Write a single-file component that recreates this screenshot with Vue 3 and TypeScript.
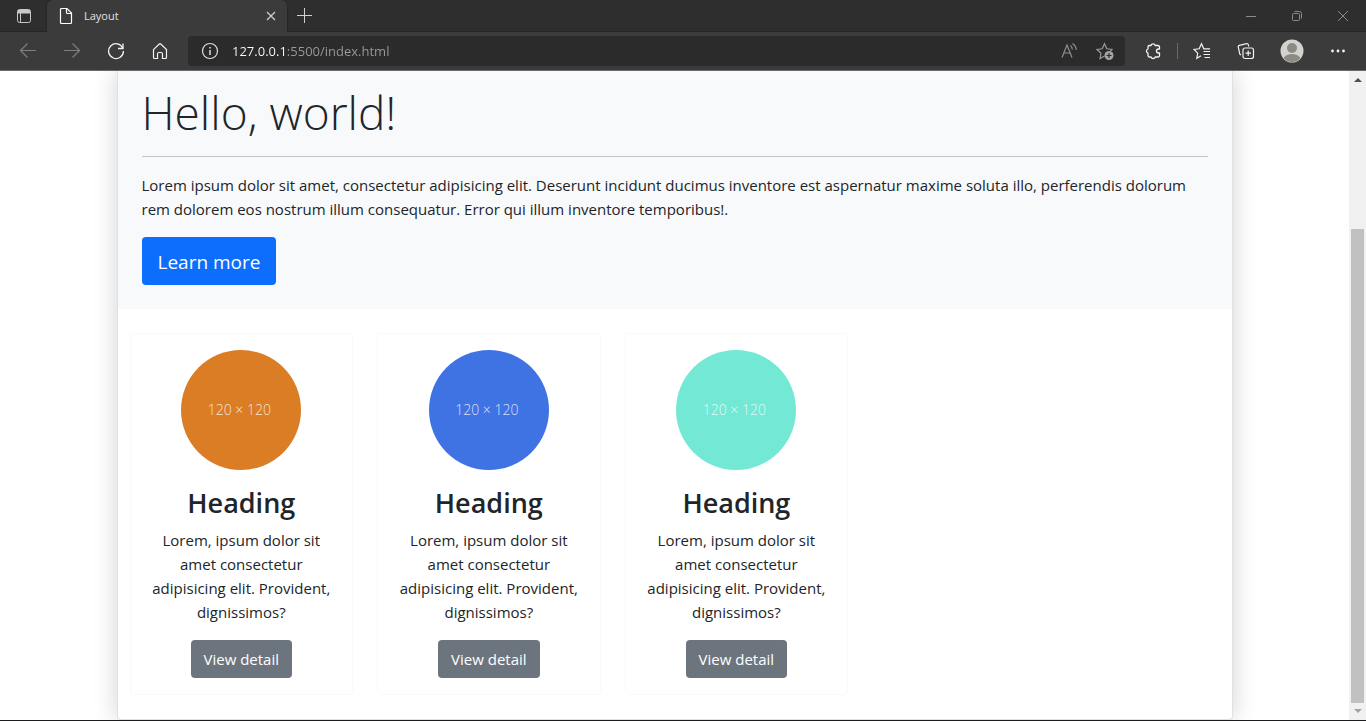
<script setup lang="ts">
import { ref } from 'vue'

interface Card {
  id: number
  color: string
  title: string
  text: string
}

const address = ref('127.0.0.1:5500/index.html')

const cards: Card[] = ['#da7d25', '#3f73e4', '#73e8d5'].map((color, index) => ({
  id: index + 1,
  color,
  title: 'Heading',
  text: 'Lorem, ipsum dolor sit amet consectetur adipisicing elit. Provident, dignissimos?',
}))
</script>

<template>
  <div class="window">
    <header class="tabs">
      <button class="tab-menu" type="button" aria-label="Tab actions">
        <svg width="16" height="16" viewBox="0 0 16 16">
          <rect x="1.5" y="1.5" width="13" height="13" rx="2" fill="none" stroke="#c8c8c8" />
          <path d="M2 2h12v3.5H2z" fill="#c8c8c8" />
          <path d="M4.5 5v9" stroke="#c8c8c8" />
        </svg>
      </button>
      <div class="tab">
        <svg width="16" height="18" viewBox="0 0 16 18" fill="none" stroke="#fff" stroke-width="1.2">
          <path d="M3.5 1.5H9L13.5 6v9.5a1 1 0 0 1-1 1h-9a1 1 0 0 1-1-1v-13a1 1 0 0 1 1-1z" />
          <path d="M8.5 1.5v4a1 1 0 0 0 1 1h4" />
        </svg>
        <span class="tab-title">Layout</span>
        <button class="tab-close" type="button" aria-label="Close tab">
          <svg width="10" height="10" viewBox="0 0 10 10" stroke="#d0d0d0" stroke-width="1.2">
            <path d="M1 1l8 8M9 1L1 9" />
          </svg>
        </button>
      </div>
      <button class="tab-new" type="button" aria-label="New tab">
        <svg width="16" height="16" viewBox="0 0 16 16" stroke="#d0d0d0" fill="none">
          <path d="M7.5 0v15M0 7.5h15" />
        </svg>
      </button>
      <div class="window-controls">
        <button type="button" aria-label="Minimize">
          <svg width="12" height="12" viewBox="0 0 12 12" stroke="#8b8b8b"><path d="M1 6.5h10" /></svg>
        </button>
        <button type="button" aria-label="Restore">
          <svg width="12" height="12" viewBox="0 0 12 12" stroke="#8b8b8b" fill="none">
            <rect x="1.5" y="3.5" width="7" height="7" rx="1" />
            <path d="M3.5 1.5h5a2 2 0 0 1 2 2v5" />
          </svg>
        </button>
        <button type="button" aria-label="Close">
          <svg width="12" height="12" viewBox="0 0 12 12" stroke="#8b8b8b"><path d="M1 1l10 10M11 1L1 11" /></svg>
        </button>
      </div>
    </header>

    <nav class="toolbar">
      <button class="tool" type="button" aria-label="Back">
        <svg width="18" height="18" viewBox="0 0 18 18" fill="none" stroke="#7f7f7f" stroke-width="1.2">
          <path d="M17 8.5H1.5M8.5 1.5l-7 7 7 7" />
        </svg>
      </button>
      <button class="tool" type="button" aria-label="Forward">
        <svg width="18" height="18" viewBox="0 0 18 18" fill="none" stroke="#7f7f7f" stroke-width="1.2">
          <path d="M1 8.5h15.5M9.5 1.5l7 7-7 7" />
        </svg>
      </button>
      <button class="tool" type="button" aria-label="Refresh">
        <svg width="18" height="18" viewBox="0 0 18 18" fill="none" stroke="#f2f2f2" stroke-width="1.3">
          <path d="M15.8 6.2A7.4 7.4 0 1 0 16.4 9" />
          <path d="M16 1.5v5h-5" />
        </svg>
      </button>
      <button class="tool" type="button" aria-label="Home">
        <svg width="18" height="18" viewBox="0 0 18 18" fill="none" stroke="#f2f2f2" stroke-width="1.2">
          <path d="M2.5 7.6L8.3 2a1 1 0 0 1 1.4 0l5.8 5.6v7.9a1 1 0 0 1-1 1h-3v-4.5a1.500 1.500 0 0 0-1.500-1.500H8a1.500 1.500 0 0 0-1.500 1.500v4.500h-3a1 1 0 0 1-1-1z" />
        </svg>
      </button>

      <div class="address">
        <svg width="18" height="18" viewBox="0 0 18 18" fill="none" stroke="#e0e0e0" stroke-width="1.2">
          <circle cx="9" cy="9" r="7.5" />
          <path d="M9 8v5M9 5v1.5" stroke-width="1.5" />
        </svg>
        <input v-model="address" class="address-input" type="text" aria-label="Address" />
        <button class="tool-small" type="button" aria-label="Read aloud">
          <svg width="18" height="18" viewBox="0 0 18 18" fill="none" stroke="#8f8f8f" stroke-width="1.2">
            <path d="M2 15.500L7 3l5 12.500M3.700 11h6.600" />
            <path d="M10.500 3.500a5.500 5.500 0 0 1 1.800 4M12.500 1.500a8.500 8.500 0 0 1 3.800 6.500" />
          </svg>
        </button>
        <button class="tool-small" type="button" aria-label="Add to favorites">
          <svg width="18" height="18" viewBox="0 0 18 18" fill="none" stroke="#9a9a9a" stroke-width="1.2">
            <path d="M8.500 14L4 16.500l1-5.300-4-3.700 5.200-.7L8.500 1.800l2.300 5 5.200.7-1.500 1.500" />
            <circle cx="13" cy="13.500" r="4.500" fill="#a5a5a5" stroke="none" />
            <path d="M13 11v5M10.500 13.500h5" stroke="#2b2b2b" />
          </svg>
        </button>
      </div>

      <button class="tool" type="button" aria-label="Extensions">
        <svg width="18" height="18" viewBox="0 0 18 18" fill="none" stroke="#f5f5f5" stroke-width="1.3" stroke-linejoin="round">
          <path d="M5.500 3.500H7a2.200 2.200 0 0 1 4.200 0h2.800a1.500 1.500 0 0 1 1.500 1.500v2h-1a2 2 0 0 0 0 4h1v2.500a1.500 1.500 0 0 1-1.500 1.500h-2.800a2.200 2.200 0 0 1-4.200 0H5.500A1.500 1.500 0 0 1 4 13.500v-2.300a2.200 2.200 0 0 1 0-4.200V5a1.500 1.500 0 0 1 1.500-1.500z" />
        </svg>
      </button>
      <span class="divider"></span>
      <button class="tool" type="button" aria-label="Favorites">
        <svg width="18" height="18" viewBox="0 0 18 18" fill="none" stroke="#f2f2f2" stroke-width="1.2">
          <path d="M8 13.800L3.800 16.300l.9-5.100L1 7.500l5.200-.7 2.300-5 2.300 5H17" />
          <path d="M10.500 9.500H17M10.500 12.500H17M11.500 15.500H17" />
        </svg>
      </button>
      <button class="tool" type="button" aria-label="Collections">
        <svg width="18" height="18" viewBox="0 0 18 18" fill="none" stroke="#f2f2f2" stroke-width="1.2">
          <path d="M4 13L2.800 12.200 1.300 5.200a1.500 1.500 0 0 1 1.100-1.900l7-1.700a1.500 1.500 0 0 1 1.900 1.100l.5 1.800" />
          <rect x="6" y="6" width="10.500" height="10.500" rx="2" />
          <path d="M11.200 8.500v5.500M8.500 11.200h5.500" />
        </svg>
      </button>
      <button class="tool profile" type="button" aria-label="Profile">
        <svg width="24" height="24" viewBox="0 0 24 24">
          <defs>
            <clipPath id="avatar"><circle cx="12" cy="12" r="11" /></clipPath>
          </defs>
          <circle cx="12" cy="12" r="11.5" fill="#d4d2cf" />
          <circle cx="12" cy="9" r="5" fill="#8d8985" />
          <ellipse cx="12" cy="21" rx="9" ry="6" fill="#8d8985" clip-path="url(#avatar)" />
        </svg>
      </button>
      <button class="tool profile" type="button" aria-label="Settings and more">
        <svg width="18" height="18" viewBox="0 0 18 18" fill="#f2f2f2">
          <circle cx="3.500" cy="9" r="1.400" /><circle cx="9" cy="9" r="1.400" /><circle cx="14.500" cy="9" r="1.400" />
        </svg>
      </button>
    </nav>

    <div class="viewport">
      <main class="page">
        <div class="sheet">
          <section class="hero">
            <h1>Hello, world!</h1>
            <hr />
            <p>
              Lorem ipsum dolor sit amet, consectetur adipisicing elit. Deserunt incidunt ducimus inventore est
              aspernatur maxime soluta illo, perferendis dolorum rem dolorem eos nostrum illum consequatur. Error
              qui illum inventore temporibus!.
            </p>
            <a class="btn btn-primary" href="#">Learn more</a>
          </section>

          <section class="cards">
            <article v-for="card in cards" :key="card.id" class="card">
              <div class="circle" :style="{ backgroundColor: card.color }">120 × 120</div>
              <h2>{{ card.title }}</h2>
              <p>{{ card.text }}</p>
              <a class="btn btn-secondary" href="#">View detail</a>
            </article>
          </section>
        </div>
      </main>
      <div class="scrollbar" aria-hidden="true">
        <svg width="17" height="17" viewBox="0 0 17 17"><path d="M5 11h8L9 7z" fill="#505050" /></svg>
        <div class="track"><div class="thumb"></div></div>
        <svg width="17" height="17" viewBox="0 0 17 17"><path d="M5 6h8l-4 4z" fill="#a3a3a3" /></svg>
      </div>
    </div>
  </div>
</template>

<style>
body {
  margin: 0;
}
</style>

<style scoped>
* {
  box-sizing: border-box;
}

.window {
  display: flex;
  flex-direction: column;
  height: 100vh;
  overflow: hidden;
  border-bottom: 1px solid #1c1c1e;
  background: #fff;
  color: #212529;
  font-family: 'Open Sans', 'Noto Sans', sans-serif;
}

button {
  display: flex;
  align-items: center;
  justify-content: center;
  padding: 0;
  border: 0;
  background: none;
}

svg {
  display: block;
  flex: none;
}

.tabs {
  display: flex;
  flex: none;
  height: 32px;
  background: #2e2e2e;
}

.tab-menu {
  width: 47px;
  box-shadow: inset 0 -1px #252525;
}

.tab {
  display: flex;
  align-items: center;
  gap: 10px;
  width: 240px;
  padding: 0 11px;
  border-radius: 6px 6px 0 0;
  background: #3b3b3b;
  box-shadow: 0 0 2px #1a1a1a;
}

.tab-title {
  flex: 1;
  color: #e2e2e2;
  font-size: 11px;
  line-height: 16px;
}

.tab-new {
  width: 36px;
}

.window-controls {
  display: flex;
  flex: 1;
  justify-content: flex-end;
}

.window-controls button {
  width: 46px;
}

.tabs > .tab-new,
.window-controls {
  box-shadow: inset 0 -1px #252525;
}

.toolbar {
  display: flex;
  flex: none;
  align-items: center;
  height: 39px;
  padding: 0 6px;
  border-bottom: 1px solid #6b696b;
  background: #3b3b3b;
}

.tool {
  flex: none;
  width: 44px;
  height: 32px;
}

.profile {
  margin-left: 2px;
}

.address {
  display: flex;
  flex: 1;
  align-items: center;
  height: 30px;
  margin: 0 6px;
  padding: 0 2px 0 13px;
  border-radius: 4px;
  background: #2b2b2b;
}

.address-input {
  flex: 1;
  min-width: 0;
  height: 24px;
  margin-left: 13px;
  padding: 0;
  border: 0;
  outline: 0;
  background: linear-gradient(to right, #fff 54px, #9b9b9b 54px);
  background-clip: text;
  color: transparent;
  font-family: inherit;
  font-size: 13px;
}

.tool-small {
  width: 36px;
  height: 28px;
}

.divider {
  width: 1px;
  height: 16px;
  margin: 0 2px;
  background: #6b6b6b;
}

.viewport {
  display: flex;
  flex: 1;
  min-height: 0;
}

.page {
  flex: 1;
  min-width: 0;
  overflow: hidden;
  background: #fff;
}

.sheet {
  max-width: 1116px;
  margin: 0 auto;
  border: 1px solid #dee2e6;
  border-top: 0;
  border-radius: 0 0 4px 4px;
  background: #fff;
  box-shadow: 0 0 24px rgba(0, 0, 0, 0.18);
}

.hero {
  padding: 12px 24px 24px;
  background: #f8f9fb;
}

h1 {
  margin: 0 0 15px;
  font-size: 46px;
  font-weight: 300;
  line-height: 58px;
}

hr {
  height: 1px;
  margin: 0 0 16px;
  border: 0;
  background: #c2c3c5;
}

p {
  margin: 0 0 16px;
  font-size: 15px;
  line-height: 24px;
}

.btn {
  display: inline-block;
  border-radius: 4px;
  color: #fff;
  text-decoration: none;
  vertical-align: top;
}

.btn-primary {
  padding: 10px 16px 8px;
  background: #0d6efd;
  font-size: 19px;
  line-height: 30px;
}

.btn-secondary {
  padding: 7px 13px;
  background: #6c757d;
  font-size: 15px;
  line-height: 24px;
}

.cards {
  display: grid;
  grid-template-columns: repeat(3, 1fr);
  gap: 24px;
  width: 66.6667%;
  padding: 24px 12px;
}

.card {
  padding: 16px;
  border: 1px solid #f8f9fa;
  border-radius: 4px;
  text-align: center;
}

.circle {
  width: 120px;
  height: 120px;
  margin: 0 auto 16px;
  padding-right: 4px;
  border-radius: 50%;
  color: rgba(255, 255, 255, 0.8);
  font-size: 14px;
  font-weight: 300;
  line-height: 120px;
}

h2 {
  margin: 0 0 8px;
  font-size: 27px;
  font-weight: 600;
  line-height: 34px;
}

.scrollbar {
  display: flex;
  flex: none;
  flex-direction: column;
  width: 17px;
  background: #f1f1f1;
}

.track {
  display: flex;
  flex: 1;
  flex-direction: column;
  justify-content: flex-end;
  padding: 0 2px;
}

.thumb {
  height: 77%;
  background: #c1c1c1;
}
</style>
